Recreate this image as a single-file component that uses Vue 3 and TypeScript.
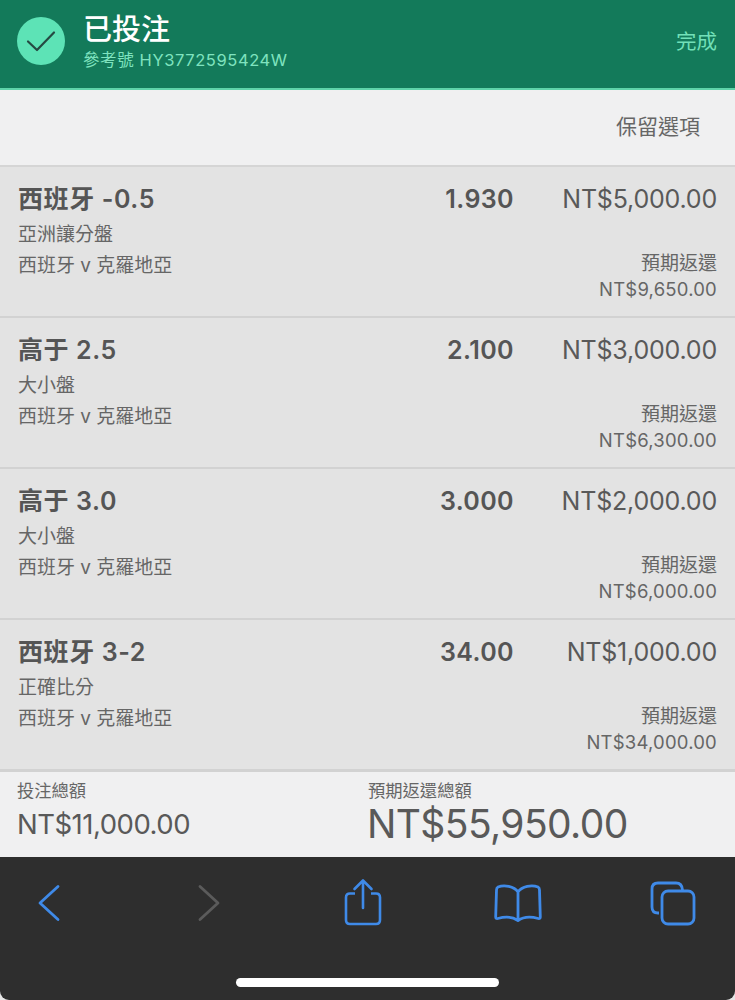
<script setup lang="ts">
interface Bet { name: string; market: string; odds: string; stake: string; ret: string }
const bets: Bet[] = [
  { name: '西班牙 -0.5', market: '亞洲讓分盤', odds: '1.930', stake: 'NT$5,000.00', ret: 'NT$9,650.00' },
  { name: '高于 2.5', market: '大小盤', odds: '2.100', stake: 'NT$3,000.00', ret: 'NT$6,300.00' },
  { name: '高于 3.0', market: '大小盤', odds: '3.000', stake: 'NT$2,000.00', ret: 'NT$6,000.00' },
  { name: '西班牙 3-2', market: '正確比分', odds: '34.00', stake: 'NT$1,000.00', ret: 'NT$34,000.00' },
]
</script>

<template>
  <div class="page">
    <header class="top">
      <div class="badge">
        <svg width="30" height="24" viewBox="0 0 30 24"><path d="M2 12.5 L11 21 L28 3.500" fill="none" stroke="#254a42" stroke-width="2.2" stroke-linecap="round" stroke-linejoin="round"/></svg>
      </div>
      <div class="top-text">
        <div class="title">已投注</div>
        <div class="ref">參考號 HY3772595424W</div>
      </div>
      <div class="done">完成</div>
    </header>
    <div class="keep"><span>保留選項</span></div>
    <section class="list">
      <article v-for="b in bets" :key="b.name" class="bet">
        <div class="row-main">
          <div class="name">{{ b.name }}</div>
          <div class="odds">{{ b.odds }}</div>
          <div class="stake">{{ b.stake }}</div>
        </div>
        <div class="row-sub">
          <div>
            <div class="market">{{ b.market }}</div>
            <div class="match">西班牙 v 克羅地亞</div>
          </div>
          <div class="ret">
            <div>預期返還</div>
            <div class="ret-val">{{ b.ret }}</div>
          </div>
        </div>
      </article>
    </section>
    <section class="totals">
      <div class="total-l">
        <div class="t-label">投注總額</div>
        <div class="t-small">NT$11,000.00</div>
      </div>
      <div class="total-r">
        <div class="t-label">預期返還總額</div>
        <div class="t-big">NT$55,950.00</div>
      </div>
    </section>
    <nav class="bar">
      <div class="icons">
        <svg class="ic" width="24" height="38" viewBox="0 0 24 38"><path d="M21 2.5 L3 19 L21 35.5" fill="none" stroke="#3f8ae8" stroke-width="2.8" stroke-linecap="round" stroke-linejoin="round"/></svg>
        <svg class="ic" width="24" height="38" viewBox="0 0 24 38"><path d="M3 2.5 L21 19 L3 35.5" fill="none" stroke="#5b5b5b" stroke-width="2.8" stroke-linecap="round" stroke-linejoin="round"/></svg>
        <svg class="ic" width="38" height="48" viewBox="0 0 38 48"><path d="M11 15.5 H6 Q2 15.5 2 19.5 V42 Q2 46 6 46 H32 Q36 46 36 42 V19.5 Q36 15.5 32 15.5 H27" fill="none" stroke="#3f8ae8" stroke-width="2.6"/><path d="M19 30 V2.5 M10.5 11 L19 2.5 L27.5 11" fill="none" stroke="#3f8ae8" stroke-width="2.6" stroke-linecap="round" stroke-linejoin="round"/></svg>
        <svg class="ic" width="48" height="40" viewBox="0 0 48 40"><path d="M24 9 C20 3 10 1.5 4 4 Q2.500 4.800 2.500 7 L1.700 34 Q1.700 36 3.800 35.500 C11 33.500 19 34 24 37.500 C29 34 37 33.500 44.200 35.500 Q46.300 36 46.300 34 L45.500 7 Q45.500 4.800 44 4 C38 1.500 28 3 24 9 Z M24 9 V37" fill="none" stroke="#3f8ae8" stroke-width="2.800" stroke-linejoin="round"/></svg>
        <svg class="ic" width="46" height="45" viewBox="0 0 46 45"><path d="M9 32 H8 Q2 32 2 26 V8 Q2 2 8 2 H26 Q32 2 32.500 9" fill="none" stroke="#3f8ae8" stroke-width="2.800"/><rect x="12" y="10" width="32" height="33" rx="6" fill="none" stroke="#3f8ae8" stroke-width="2.800"/></svg>
      </div>
      <div class="home"></div>
    </nav>
  </div>
</template>

<style>
html, body { margin: 0; background: #e6e6e6; }
</style>

<style scoped>
.page {
  width: 735px;
  height: 1000px;
  overflow: hidden;
  display: flex;
  flex-direction: column;
  font-family: Inter, "Noto Sans CJK TC", sans-serif;
  color: #555;
}
.top {
  height: 88px;
  background: #137a5a;
  border-bottom: 2px solid #5fd3a9;
  display: flex;
  align-items: center;
  padding: 0 18px 0 17px;
  flex: none;
}
.badge {
  width: 48px;
  height: 48px;
  border-radius: 50%;
  background: #5de3b6;
  display: flex;
  align-items: center;
  justify-content: center;
  flex: none;
  margin: -6px 18px 0 0;
}
.top-text { flex: 1; }
.title { font-size: 29px; line-height: 34px; font-weight: 500; color: #fff; margin-top: -6px; }
.ref { font-size: 16.500px; line-height: 20px; color: #7fe3bf; letter-spacing: 0.600px; margin-top: 3px; }
.done { font-size: 20.500px; color: #72e0b8; margin-top: -8px; }
.keep {
  height: 70px;
  flex: none;
  background: #f0f0f1;
  display: flex;
  align-items: center;
  justify-content: flex-end;
  padding: 0 35px 5px 0;
  font-size: 21px;
  color: #666;
  border-bottom: 2px solid #d5d5d5;
}
.list { flex: none; }
.bet {
  height: 149px;
  background: #e3e3e3;
  border-bottom: 2px solid #d2d2d2;
  padding: 0 18px;
}
.row-main { display: flex; align-items: center; height: 31px; padding-top: 16px; }
.name { flex: 1; font-size: 25px; font-weight: 600; color: #555; margin-top: -3px; letter-spacing: 0.600px; }
.odds { width: 91px; text-align: right; font-size: 25px; font-weight: 600; color: #555; letter-spacing: 0.400px; }
.stake { width: 203px; text-align: right; font-size: 25px; color: #595959; letter-spacing: -0.200px; }
.row-sub { display: flex; justify-content: space-between; }
.market { font-size: 19px; line-height: 26px; color: #666; margin-top: 8px; }
.match { font-size: 19px; line-height: 26px; color: #666; margin-top: 5px; }
.ret { text-align: right; font-size: 19px; color: #666; line-height: 26px; margin-top: 37px; }
.ret-val { font-size: 18.500px; letter-spacing: 0.200px; margin-top: -1px; }
.totals {
  flex: none;
  height: 85px;
  background: #f0f0f1;
  border-top: 1px solid #d2d2d2;
  display: flex;
  padding: 0 18px 0 17px;
}
.total-l { width: 351px; }
.t-label { font-size: 17.300px; line-height: 20px; color: #666; margin-top: 9px; }
.t-small { font-size: 27.500px; line-height: 36px; color: #595959; margin-top: 5px; letter-spacing: -0.500px; }
.t-big { font-size: 39px; line-height: 44px; color: #595959; margin: 1px 0 0 -1px; letter-spacing: -0.600px; }
.bar { flex: 1; background: #2e2e2e; position: relative; border-radius: 0 0 9px 9px; }
.icons {
  display: flex;
  align-items: flex-start;
  padding-left: 37px;
}
.ic:nth-child(1) { margin-top: 27px; }
.ic:nth-child(2) { margin-top: 27px; margin-left: 136px; }
.ic:nth-child(3) { margin-top: 21px; margin-left: 123px; }
.ic:nth-child(4) { margin-top: 26px; margin-left: 112px; }
.ic:nth-child(5) { margin-top: 24px; margin-left: 108px; }
.home {
  position: absolute;
  left: 236px;
  top: 121px;
  width: 263px;
  height: 9px;
  border-radius: 5px;
  background: #fff;
}
</style>
